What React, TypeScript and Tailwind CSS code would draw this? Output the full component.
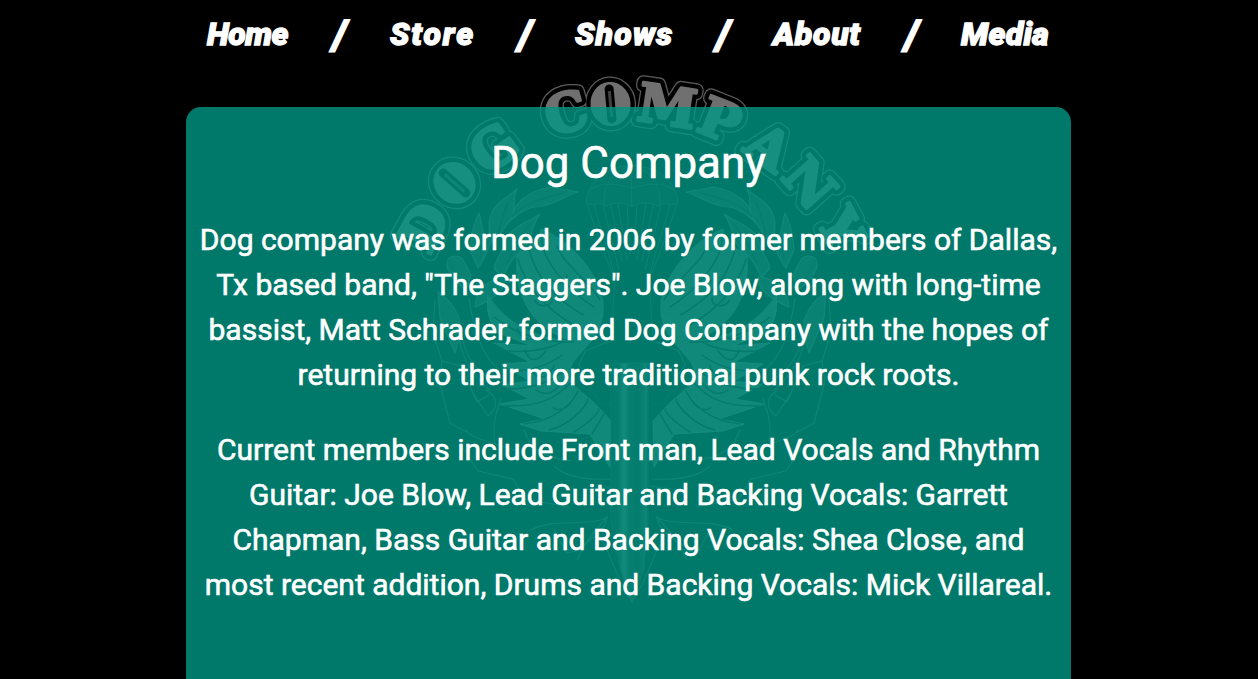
const NAV = [
  { label: 'Home', box: 'w-[82px]', gap: 'w-0', font: 'tracking-[-0.5px]' },
  { label: 'Store', box: 'w-[85px]', gap: 'w-[101px]', font: 'tracking-[1.9px]' },
  { label: 'Shows', box: 'w-[98px]', gap: 'w-[100px]', font: 'tracking-[1.1px]' },
  { label: 'About', box: 'w-[89px]', gap: 'w-[100px]', font: 'tracking-[0.7px]' },
  { label: 'Media', box: 'w-[89px]', gap: 'w-[99px]', font: 'tracking-[0.3px]' },
];

const HISTORY = [
  'Dog company was formed in 2006 by former members of Dallas,',
  'Tx based band, "The Staggers". Joe Blow, along with long-time',
  'bassist, Matt Schrader, formed Dog Company with the hopes of',
  'returning to their more traditional punk rock roots.',
];

const MEMBERS = [
  'Current members include Front man, Lead Vocals and Rhythm',
  'Guitar: Joe Blow, Lead Guitar and Backing Vocals: Garrett',
  'Chapman, Bass Guitar and Backing Vocals: Shea Close, and',
  'most recent addition, Drums and Backing Vocals: Mick Villareal.',
];

const LETTERS: [string, number][] = [
  ['D', -61.5], ['O', -48.5], ['G', -35.7], ['C', -16.2], ['O', -5.2],
  ['M', 8.6], ['P', 21.8], ['A', 35.4], ['N', 48.5], ['Y', 62],
];

function Arc({ fill, stroke, width }: { fill: string; stroke: string; width: number }) {
  return (
    <g fill={fill} stroke={stroke} strokeWidth={width} strokeLinejoin="round">
      {LETTERS.map(([c, a], i) => (
        <g key={i} transform={`rotate(${a} 632 340)`}>
          {c === 'O' ? (
            <ellipse cx="632" cy="103" rx="18.5" ry="20.5" />
          ) : (
            <text x="632" y="122" textAnchor="middle" fontSize="53" fontWeight="700" fontFamily="DejaVu Serif, serif">{c}</text>
          )}
        </g>
      ))}
    </g>
  );
}

/* Left half of the wreath, canopy and wings; drawn twice, the second time mirrored. */
function Half() {
  return (
    <g strokeLinejoin="round" strokeLinecap="round">
      <g fill="#303030" stroke="#505050" strokeWidth="1.2">
        <path d="M513 212C518 199 532 191 550 187L578 192C566 195 558 203 542 206C528 207 520 211 506 225Z" />
        <path d="M490 236C487 221 491 208 503 200L517 189C511 201 518 209 509 221L498 238Z" />
        <path d="M470 250C471 234 474 223 479 213L484 235L493 236C489 250 485 258 478 268Z" />
        <path d="M447 266C446 257 454 254 462 258L471 275L466 290C456 282 449 276 447 266Z" />
        <path d="M494 268C500 252 505 246 507 236C517 224 530 221 540 214C530 226 534 240 521 251C511 258 507 270 502 277Z" />
        <path d="M475 307C477 287 487 281 505 276C508 289 492 300 475 307Z" />
        <path d="M438 292C450 300 461 314 461 330L455 353L440 318Z" />
      </g>
      <path d="M512 216C525 202 545 198 567 192M499 237C498 224 506 211 508 202M480 262L482 238M506 264C515 249 519 236 531 223M448 260L463 286" fill="none" stroke="#161616" strokeWidth="1.2" />
      <g fill="none" stroke="#444" strokeWidth="1.1">
        <path d="M435 300L433 333L442 361L439 381L450 423L467 432M442 361L461 366L477 402L489 395M469 298C476 342 484 356 501 372M461 330C464 354 475 370 490 379M501 399C492 422 493 435 495 444M524 430C530 448 540 457 572 461M462 447L478 471L513 479L525 499L568 507" />
        <path d="M490 390C472 375 462 357 459 339M486 390C496 396 501 405 488 416L473 393M466 430C469 437 488 442 514 450M554 466C567 478 588 480 612 479M531 530C555 517 586 528 608 517C596 529 586 540 577 560M554 530L567 553L582 549M562 550C581 552 602 532 607 520M586 490L614 486" />
        <path d="M603 544C612 555 615 576 626 591L632 602M608 342L585 351L579 365L587 376" />
      </g>
      <path d="M517 255C531 246 539 242 541 229C570 240 598 272 603 302C605 325 594 337 570 340C539 331 513 303 517 255Z" fill="#505050" stroke="#5c5c5c" />
      <path d="M497 332C489 322 486 310 488 295C502 318 527 337 568 341L603 314C598 347 567 356 569 377C574 389 590 397 600 409L611 421L610 467L590 434L541 431L520 424L545 419L500 404L530 399L502 385L530 381L501 364L530 362L494 343L532 346Z" fill="#525252" stroke="#646464" />
      <g fill="none" stroke="#0c0c0c" strokeWidth="1.5">
        <path d="M518 259C526 289 549 311 574 325M529 249C535 275 554 298 583 315M542 238C541 259 568 291 594 307M557 246C565 267 591 282 600 300M494 317C515 334 544 343 574 342M500 350C523 354 547 350 562 342M501 370C526 373 547 366 562 355M504 389C534 389 550 382 566 370M505 406C542 407 557 397 570 383M524 424C553 421 572 405 578 391M549 430C568 426 586 408 588 399M574 432C584 426 598 415 599 409M592 434L604 414M525 350C530 365 539 360 546 351M532 371C540 382 550 376 554 366M536 390C549 399 557 389 565 379M553 408C566 414 571 402 577 393M517 328C520 340 532 342 539 336M535 301C540 308 553 307 552 298M552 280C558 286 567 284 567 275" />
        <path d="M587 389C596 389 596 403 604 404L611 403" strokeWidth="3" />
      </g>
      <path d="M632 165C607 167 588 179 586 203C594 207 600 201 606 206C613 202 622 202 632 206Z" fill="#101010" stroke="#383838" />
      <path d="M587 204L606 258L615 279L611 342M594 205L615 276M603 205L619 270M611 205L622 262M618 204L627 260M627 205L630 255M590 190C602 181 617 184 632 188M604 204C604 186 611 170 632 166" fill="none" stroke="#363636" />
    </g>
  );
}

function Emblem() {
  return (
    <svg className="pointer-events-none absolute left-0 top-0" width="1258" height="679" viewBox="0 0 1258 679" aria-hidden="true">
      <defs>
        <linearGradient id="blade" x1="0" x2="1" y1="0" y2="0">
          <stop offset="0" stopColor="#0c0c0c" />
          <stop offset=".2" stopColor="#1a1a1a" />
          <stop offset=".35" stopColor="#5c5c5c" />
          <stop offset=".5" stopColor="#202020" />
          <stop offset=".75" stopColor="#141414" />
          <stop offset=".96" stopColor="#444" />
          <stop offset="1" stopColor="#161616" />
        </linearGradient>
      </defs>
      <Half />
      <g transform="translate(1264 0) scale(-1 1)"><Half /></g>
      <path d="M611 363H648V519L644 569L632 602L620 569L611 519Z" fill="url(#blade)" stroke="#292929" />
      <Arc fill="#5c5c5c" stroke="#5c5c5c" width={14} />
      <Arc fill="#000" stroke="#000" width={11.5} />
      <Arc fill="#707070" stroke="#707070" width={3} />
      {[-48.5, -5.2].map((a) => (
        <g key={a} transform={`rotate(${a} 632 340)`}>
          <path d="M632 88V118" stroke="#000" strokeWidth="9" strokeLinecap="round" />
          <path d="M632 90V116" stroke="#404040" strokeWidth="3" />
        </g>
      ))}
    </svg>
  );
}

function Copy({ lines }: { lines: string[] }) {
  return (
    <p className="mb-[30px] text-[30px] leading-[45px] [-webkit-text-stroke:0.6px_white]">
      {lines.map((line) => <span key={line} className="block whitespace-nowrap">{line}</span>)}
    </p>
  );
}

export default function App() {
  return (
    <div className="relative flex h-[679px] w-[1258px] flex-col overflow-hidden bg-black font-['Roboto',sans-serif] text-white">
      <Emblem />
      <nav className="relative ml-[207px] flex h-[107px] shrink-0 items-start pt-[10px] font-black italic leading-[48px]">
        {NAV.map((item, i) => (
          <div key={item.label} className="flex">
            {i > 0 && (
              <span className={`${item.gap} flex justify-center pt-[2px]`}>
                <span className="inline-block text-[40px] [-webkit-text-stroke:1.8px_white]">/</span>
              </span>
            )}
            <a href="#" className={`${item.box} ${item.font} whitespace-nowrap text-[32px] [-webkit-text-stroke:1.3px_white]`}>{item.label}</a>
          </div>
        ))}
      </nav>
      <main className="relative ml-[186px] h-[572px] w-[885px] rounded-t-[15px] bg-[#009786]/80 text-center">
        <h1 className="pt-[23px] text-[43.9px] leading-[66px] [-webkit-text-stroke:0.6px_white]">Dog Company</h1>
        <div className="flex flex-col items-center pt-[21px]">
          <Copy lines={HISTORY} />
          <Copy lines={MEMBERS} />
        </div>
      </main>
    </div>
  );
}
